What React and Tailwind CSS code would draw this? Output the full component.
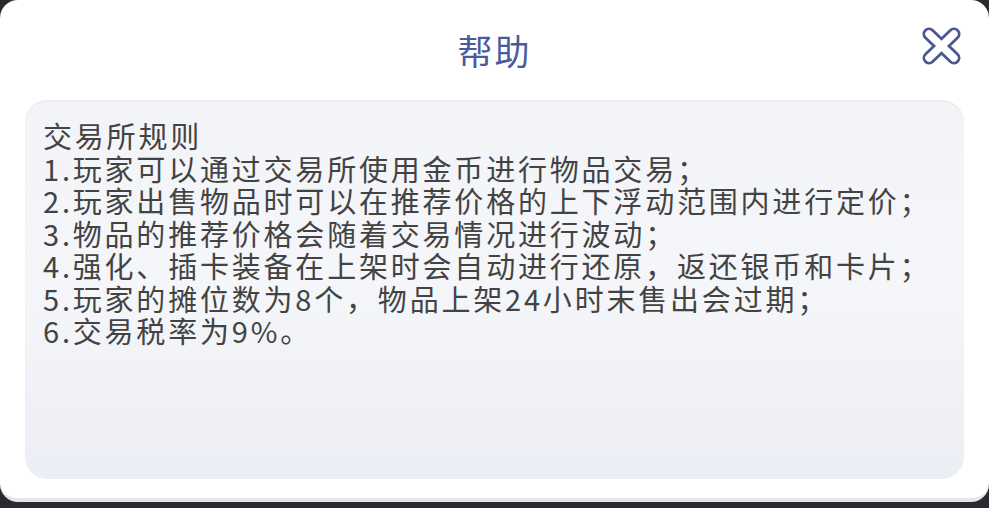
import React from "react";

const lines = [
  "交易所规则",
  "1.玩家可以通过交易所使用金币进行物品交易；",
  "2.玩家出售物品时可以在推荐价格的上下浮动范围内进行定价；",
  "3.物品的推荐价格会随着交易情况进行波动；",
  "4.强化、插卡装备在上架时会自动进行还原，返还银币和卡片；",
  "5.玩家的摊位数为8个，物品上架24小时末售出会过期；",
  "6.交易税率为9%。",
];

export default function App() {
  return (
    <div
      className="w-[989px] h-[508px] bg-[#2a2b2f] overflow-hidden"
      style={{ fontFamily: '"Noto Sans CJK SC", "Noto Sans", sans-serif' }}
    >
      <div className="h-[502px] rounded-[18px] bg-white border-b-[4px] border-[#e4e6ec] flex flex-col">
        <div className="h-[100px] relative flex items-center justify-center">
          <span className="text-[35px] leading-none text-[#4b5a9b] tracking-[2px] pb-[2px]">帮助</span>
          <svg
            className="absolute left-[921px] top-[26px]"
            width="41"
            height="40"
            viewBox="0 0 41 40"
          >
            <g strokeLinecap="round">
              <line x1="8" y1="8" x2="33" y2="32" stroke="#4a5790" strokeWidth="13" />
              <line x1="33" y1="8" x2="8" y2="32" stroke="#4a5790" strokeWidth="13" />
              <line x1="8" y1="8" x2="33" y2="32" stroke="#ffffff" strokeWidth="7.5" />
              <line x1="33" y1="8" x2="8" y2="32" stroke="#ffffff" strokeWidth="7.5" />
            </g>
          </svg>
        </div>
        <div className="mx-[25px] h-[379px] rounded-[22px] bg-gradient-to-b from-[#f3f4f7] via-[#f5f6f9] to-[#eceef5] pt-[19px] pl-[18px] shadow-[inset_0_2px_2px_rgba(0,0,0,0.03)]">
          {lines.map((t, i) => (
            <div
              key={i}
              className="whitespace-nowrap text-[29px] leading-[32.5px] tracking-[2.8px] text-[#434343]"
            >
              {t}
            </div>
          ))}
        </div>
      </div>
    </div>
  );
}
